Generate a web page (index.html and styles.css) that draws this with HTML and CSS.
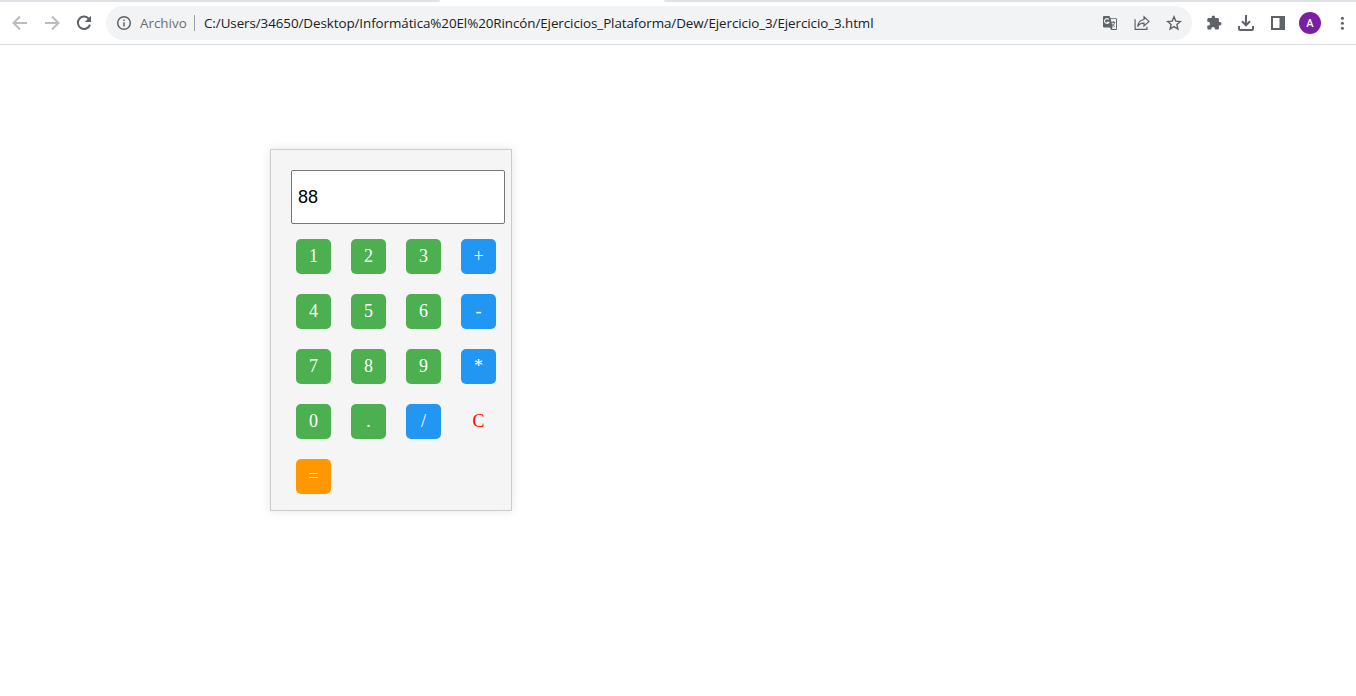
FILE: index.html
```html
<!DOCTYPE html>
<html lang="es">
<head>
<meta charset="utf-8">
<title>Ejercicio 3</title>
<link rel="stylesheet" href="styles.css">
</head>
<body>
<header class="browser">
  <div class="tabstrip"><span class="strip-left"></span><span class="strip-right"></span></div>
  <div class="toolbar">
    <nav class="nav">
      <svg class="muted" viewBox="0 0 16 16"><path d="M15 8H2M8 1.5 1.5 8 8 14.5"/></svg>
      <svg class="muted" viewBox="0 0 16 16"><path d="M1 8H14M8 1.5 14.5 8 8 14.5"/></svg>
      <svg viewBox="0 0 16 16"><path d="M13.2 4.2A6.2 6.2 0 1 0 14 9.6"/><path class="solid" d="M15 .8V7H8.8z"/></svg>
    </nav>
    <div class="address">
      <svg class="info" viewBox="0 0 16 16"><circle cx="8" cy="8" r="6.3"/><path d="M8 7.2v4.3M8 4.4v1.7"/></svg>
      <span class="scheme">Archivo</span>
      <span class="divider"></span>
      <span class="url">C:/Users/34650/Desktop/Informática%20El%20Rincón/Ejercicios_Plataforma/Dew/Ejercicio_3/Ejercicio_3.html</span>
      <div class="page-actions">
        <svg viewBox="0 0 16 16"><path class="solid" d="M2 1h5.5l1 2.2H14a1 1 0 0 1 1 1V14a1 1 0 0 1-1 1H9l-1-2.5H2a1 1 0 0 1-1-1V2a1 1 0 0 1 1-1z"/><path class="paper" d="M8.8 4.1h5.3v10H9.6l1-1.8z"/><path class="cut" d="M6.8 4.5A2.4 2.4 0 1 0 7 7.2H4.8"/><path class="thin" d="M9.2 7.3h4.2M11.3 6.2v1.1M12.6 7.3c-.3 1.8-1.3 3-2.6 4M10.2 8.5c.6 1.4 1.5 2.4 2.8 3.2"/></svg>
        <svg viewBox="0 0 16 16"><path class="fine" d="M1.1 4.2v10.2h11.8v-2.6M10 1.8l5 4.6-5 4.5V8.2C7 8.1 5 9.2 3.7 11.6 4.1 7.9 6.4 5 10 4.5z"/></svg>
        <svg viewBox="0 0 16 16"><path class="star" d="m8 1.9 1.8 4.2 4.6.4-3.5 3 1 4.5L8 11.6 4.1 14l1-4.5-3.5-3 4.6-.4z"/></svg>
      </div>
    </div>
    <div class="tools">
      <svg viewBox="0 0 16 16"><path class="solid" d="M13.8 7.1h-.9V4.3c0-.8-.6-1.4-1.4-1.4H9V2.3a1.7 1.7 0 0 0-3.4 0v.6H2.7c-.8 0-1.4.6-1.4 1.4v2.5h.8a1.9 1.9 0 0 1 0 3.8h-.8v2.6c0 .8.6 1.4 1.4 1.4h2.5v-.7a1.9 1.9 0 0 1 3.8 0v.7h2.5c.8 0 1.4-.6 1.4-1.4v-2.7h.9a1.7 1.7 0 0 0 0-3.4z"/></svg>
      <svg viewBox="0 0 16 16"><path d="M8 0v10M4 6.3 8 10.3l4-4M1 11v2.8q0 1.2 1.2 1.2h11.6q1.2 0 1.2-1.2V11"/></svg>
      <svg viewBox="0 0 16 16"><path d="M2 2h12v12H2z"/><path class="solid" d="M9.5 1H15v14H9.5z"/></svg>
      <span class="avatar">A</span>
      <svg viewBox="0 0 16 16"><circle class="solid" cx="8.4" cy="3.2" r="1.5"/><circle class="solid" cx="8.4" cy="8.2" r="1.5"/><circle class="solid" cx="8.4" cy="13.2" r="1.5"/></svg>
    </div>
  </div>
</header>
<main class="page">
  <div class="calculator">
    <input class="display" type="text" value="88">
    <div class="keys">
      <div class="key">1</div><div class="key">2</div><div class="key">3</div><div class="key operator">+</div>
      <div class="key">4</div><div class="key">5</div><div class="key">6</div><div class="key operator">-</div>
      <div class="key">7</div><div class="key">8</div><div class="key">9</div><div class="key operator">*</div>
      <div class="key">0</div><div class="key">.</div><div class="key operator">/</div><div class="key clear">C</div>
      <div class="key equals">=</div>
    </div>
  </div>
</main>
</body>
</html>
```
FILE: styles.css
```css
* { box-sizing: border-box; }
body { margin: 0; background: #fff; font-family: "Liberation Serif", serif; }
.browser { height: 45px; border-bottom: 1px solid #dadce0; font-family: "Open Sans", "Noto Sans", sans-serif; }
.tabstrip { display: flex; justify-content: space-between; height: 2px; }
.strip-left { width: 440px; background: #dee1e6; border-bottom-right-radius: 3px; }
.strip-right { width: 692px; background: #dee1e6; border-bottom-left-radius: 3px; }
.toolbar { display: flex; align-items: center; height: 42px; }
svg { display: block; width: 16px; height: 16px; fill: none; stroke: #5f6368; stroke-width: 2; flex: none; }
.nav { display: flex; gap: 16px; padding-left: 12px; width: 106px; }
.muted { stroke: #babcbe; }
.solid { fill: #5f6368; stroke: none; }
.address { display: flex; align-items: center; width: 1086px; height: 34px; padding: 0 10px; background: #f1f3f4; border-radius: 17px; }
.info { stroke-width: 1.5; }
.scheme, .url { font-size: 13.4px; line-height: 20px; white-space: nowrap; }
.scheme { width: 46px; margin-left: 8px; color: #6b6f73; }
.divider { width: 1px; height: 16px; margin: 0 9px 0 8px; background: #9aa0a6; }
.url { color: #202124; letter-spacing: -0.075px; }
.page-actions { display: flex; gap: 16px; margin-left: auto; }
.paper { fill: #f1f3f4; stroke: none; }
.cut { stroke: #f1f3f4; stroke-width: 1.1; }
.thin { stroke-width: .9; }
.fine { stroke-width: 1.2; }
.star { stroke-width: 1.4; }
.tools { display: flex; align-items: center; gap: 16px; padding-left: 14px; }
.avatar { width: 22px; height: 22px; margin: 0 -3px; border-radius: 50%; background: #7b1fa2; color: #fff; font: 500 11px/23px Roboto, sans-serif; text-align: center; }
.page { padding: 104px 0 20px 270px; }
.calculator { width: 242px; height: 362px; padding: 20px; border: 1px solid #ccc; background: #f5f5f5; box-shadow: 0 0 10px rgba(0, 0, 0, .1); }
.display { display: block; width: 214px; height: 54px; padding: 1px 6px; border: 1px solid #767676; border-radius: 2px; background: #fff; color: #000; font: 18px "Liberation Sans", sans-serif; outline: 0; }
.keys { display: grid; grid-template-columns: repeat(4, 35px); gap: 20px; margin: 15px 0 0 5px; }
.key { height: 35px; border-radius: 5px; background: #4caf50; color: #fff; font-size: 18px; line-height: 35px; text-align: center; }
.operator { background: #2196f3; }
.clear { background: none; color: #f00; }
.equals { background: #ff9800; }
```
